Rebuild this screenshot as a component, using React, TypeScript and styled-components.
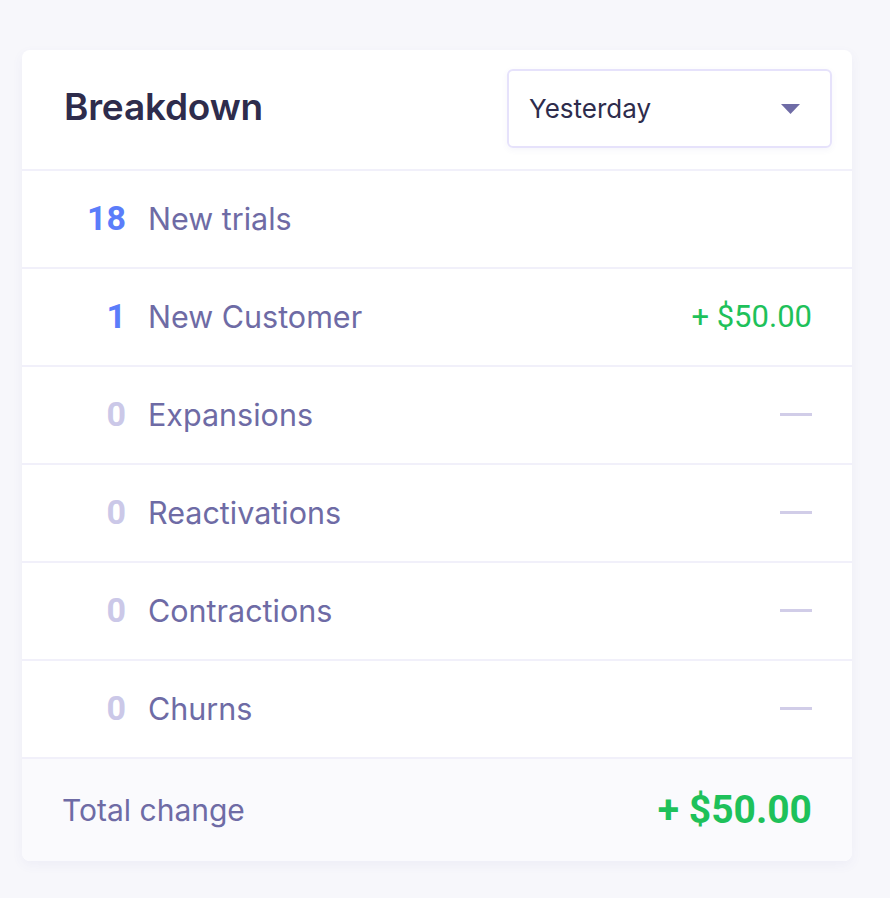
import React from "react";
import styled, { createGlobalStyle } from "styled-components";

type Row = { count: number; label: string; amount?: string; empty?: boolean };

const rows: Row[] = [
  { count: 18, label: "New trials", empty: true },
  { count: 1, label: "New Customer", amount: "+ $50.00" },
  { count: 0, label: "Expansions" },
  { count: 0, label: "Reactivations" },
  { count: 0, label: "Contractions" },
  { count: 0, label: "Churns" },
];

const App = () => {
  return (
    <>
      <GlobalStyle />
      <S.Page>
        <S.Card>
          <S.Header>
            <S.Title>Breakdown</S.Title>
            <S.Select>
              <S.SelectText>Yesterday</S.SelectText>
              <svg width="19" height="10" viewBox="0 0 19 10">
                <path d="M0 0 H19 L9.5 10 Z" fill="#6f6ca6" />
              </svg>
            </S.Select>
          </S.Header>
          {rows.map((r) => (
            <S.Row key={r.label}>
              <S.Count $zero={r.count === 0}>{r.count}</S.Count>
              <S.Label>{r.label}</S.Label>
              {r.amount ? <S.Amount>{r.amount}</S.Amount> : !r.empty && <S.Dash />}
            </S.Row>
          ))}
          <S.Footer>
            <S.FooterLabel>Total change</S.FooterLabel>
            <S.Total>+ $50.00</S.Total>
          </S.Footer>
        </S.Card>
      </S.Page>
    </>
  );
};

export default App;

const GlobalStyle = createGlobalStyle`
  body {
    margin: 0;
    background: #f7f7fb;
    font-family: "Inter", "Roboto", sans-serif;
  }
`;

const S = {
  Page: styled.div`
    padding: 50px 38px 38px 22px;
  `,
  Card: styled.div`
    width: 830px;
    background: #fff;
    border-radius: 8px;
    overflow: hidden;
    box-shadow: 0 4px 12px rgba(90, 80, 170, 0.06);
  `,
  Header: styled.div`
    height: 121px;
    display: flex;
    align-items: center;
    justify-content: space-between;
    padding: 0 20px 0 42px;
    border-bottom: 2px solid #f1f0fa;
    box-sizing: border-box;
  `,
  Title: styled.h1`
    margin: 0 0 6px;
    font-size: 37px;
    font-weight: 600;
    color: #2e2c4c;
    letter-spacing: -0.2px;
  `,
  Select: styled.div`
    width: 325px;
    height: 79px;
    box-sizing: border-box;
    border: 2px solid #e6e2fb;
    border-radius: 6px;
    display: flex;
    align-items: center;
    justify-content: space-between;
    padding: 0 30px 0 20px;
    margin-bottom: 2px;
    box-shadow: 0 2px 6px rgba(90, 80, 170, 0.06);
  `,
  SelectText: styled.span`
    font-size: 26px;
    color: #2e2c4c;
  `,
  Row: styled.div`
    height: 98px;
    box-sizing: border-box;
    display: flex;
    align-items: center;
    padding: 0 40px 2px 0;
    border-bottom: 2px solid #f1f0fa;
  `,
  Count: styled.span<{ $zero: boolean }>`
    width: 104px;
    text-align: right;
    font-family: "Roboto", sans-serif;
    font-size: 34px;
    font-weight: 700;
    color: ${(p) => (p.$zero ? "#cbc8e8" : "#5b7dfa")};
  `,
  Label: styled.span`
    flex: 1;
    margin-left: 22px;
    font-size: 30.5px;
    color: #6e6ba5;
  `,
  Amount: styled.span`
    font-family: "Roboto", sans-serif;
    font-size: 31px;
    color: #1ec15a;
  `,
  Dash: styled.span`
    width: 32px;
    height: 3px;
    background: #d1cde8;
  `,
  Footer: styled.div`
    height: 102px;
    display: flex;
    align-items: center;
    justify-content: space-between;
    padding: 0 40px 0 40px;
    background: #fafafd;
  `,
  FooterLabel: styled.span`
    font-size: 30px;
    color: #6e6ba5;
  `,
  Total: styled.span`
    font-family: "Roboto", sans-serif;
    font-size: 39px;
    font-weight: 700;
    color: #1ec15a;
  `,
};
